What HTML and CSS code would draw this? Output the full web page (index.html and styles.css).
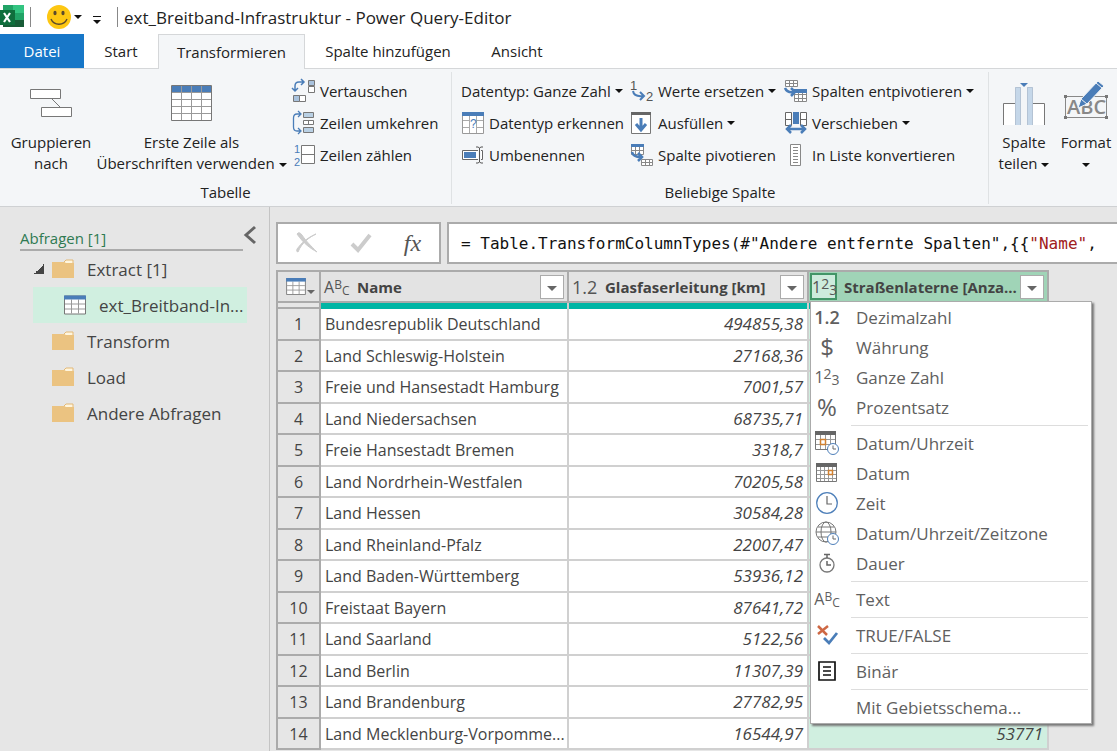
FILE: index.html
```html
<!DOCTYPE html>
<html lang="de">
<head>
  <meta charset="utf-8">
  <title>ext_Breitband-Infrastruktur - Power Query-Editor</title>
  <link rel="stylesheet" href="styles.css">
</head>
<body>
  <!-- Shared icons -->
  <svg class="defs" aria-hidden="true">
    <symbol id="folder" viewBox="0 0 22 20">
      <path d="M12 3l2-2h7v4H12z" fill="#fff6df" stroke="#e3b877"/>
      <path d="M0 3h12l2 1h8v15H0z" fill="#ebc381"/>
    </symbol>
    <symbol id="table" viewBox="0 0 22 19">
      <path d="M.5.5h21v18H.5z" fill="#fff" stroke="#777"/>
      <path d="M1 8.500h20M1 13.500h20M7.500 4v14M14.500 4v14" stroke="#999" fill="none"/>
      <path d="M0 0h22v4H0z" fill="#4a7db8"/>
    </symbol>
    <symbol id="clock" viewBox="0 0 22 22">
      <circle cx="11" cy="11" r="10.300" fill="#fff" stroke="#4f80ba" stroke-width="1.300"/>
      <path d="M11 4v8h5" fill="none" stroke="#666" stroke-width="1.200"/>
    </symbol>
  </svg>

  <header class="titlebar">
    <svg class="excel" width="24" height="24" viewBox="0 0 24 24">
      <path d="M3 0h10v22H3z" fill="#21a366"/>
      <path d="M13 0h11v8H13z" fill="#33c481"/>
      <path d="M3 7h10v8H3z" fill="#107c41"/>
      <path d="M13 8h11v7H13z" fill="#21a366"/>
      <path d="M3 15h21v7H3z" fill="#185c37"/>
      <path d="M0 5h15v15H0z" fill="#0f6e3c"/>
      <path d="M4 8l6 9M10 8l-6 9" stroke="#fff" stroke-width="2.200"/>
    </svg>
    <span class="divider"></span>
    <button class="smiley" aria-label="Feedback">
      <svg width="24" height="24" viewBox="0 0 24 24">
        <circle cx="12" cy="12" r="12" fill="#fdc712"/>
        <ellipse cx="8" cy="8" rx="1.600" ry="2.300" fill="#5b4a2c"/>
        <ellipse cx="16" cy="8" rx="1.600" ry="2.300" fill="#5b4a2c"/>
        <path d="M4 14c3 7 13 7 16 0" fill="none" stroke="#5b4a2c" stroke-width="1.400"/>
      </svg>
      <span class="caret"></span>
    </button>
    <button class="customize" aria-label="Symbolleiste anpassen"><span class="caret"></span></button>
    <span class="divider"></span>
    <h1>ext_Breitband-Infrastruktur - Power Query-Editor</h1>
  </header>

  <nav class="tabs">
    <button class="tab file">Datei</button>
    <button class="tab start">Start</button>
    <button class="tab active">Transformieren</button>
    <button class="tab add">Spalte hinzufügen</button>
    <button class="tab view">Ansicht</button>
  </nav>

  <section class="ribbon">
    <div class="group table-group">
      <div class="tools">
        <button class="large">
          <svg width="44" height="44" viewBox="0 0 44 44">
            <g fill="#fff" stroke="#777"><path d="M1.500 6.500h30v9h-30zM12.500 24.500h30v9h-30z"/><path d="M23 16l8 8"/></g>
          </svg>
          <span>Gruppieren<br>nach</span>
        </button>
        <button class="large wide">
          <svg width="44" height="44" viewBox="0 0 44 44">
            <path d="M1.500 2.500h40v35h-40z" fill="#fff" stroke="#777"/>
            <path d="M2 3h39v6H2z" fill="#4a7db8"/>
            <path d="M2 9.500h39M2 16.500h39M2 23.500h39M2 30.500h39M11.500 3v34M21.500 3v34M31.500 3v34" stroke="#999" fill="none"/>
          </svg>
          <span>Erste Zeile als<br>Überschriften verwenden <i class="caret"></i></span>
        </button>
        <div class="stack">
          <button class="small">
            <svg width="24" height="24" viewBox="0 0 24 24">
              <path d="M3 11V7q0-4 4-4h4M9 0l3 3-3 3M0 9l3 3 3-3" fill="none" stroke="#4a7db8" stroke-width="1.500"/>
              <g stroke="#777"><path d="M16.500 1.500h6v5h-6zM1.500 16.500h6v6h-6z" fill="#a9c2dd"/><path d="M16.500 7.500h6v6h-6zM7.500 16.500h6v6h-6z" fill="#fff"/></g>
            </svg>
            Vertauschen
          </button>
          <button class="small">
            <svg width="24" height="24" viewBox="0 0 24 24">
              <path d="M8 3H5Q1.500 3 1.500 7v9q0 4 3.500 4h3M6 0l3 3-3 3M6 17l3 3-3 3" fill="none" stroke="#4a7db8" stroke-width="1.300"/>
              <g stroke="#777"><path d="M11.500 1.500h10v5h-10zM11.500 16.500h10v5h-10z" fill="#b9d0e4"/><path d="M11.500 9.500h10v4h-10zM16.500 9v5" fill="#fff"/></g>
            </svg>
            Zeilen umkehren
          </button>
          <button class="small">
            <svg width="24" height="24" viewBox="0 0 24 24">
              <path d="M9.500 2.500h13v18h-13zM9 11.500h14" fill="#fff" stroke="#777"/>
              <text x="2" y="10" font-size="11" fill="#4a7db8">1</text><text x="2" y="23" font-size="11" fill="#4a7db8">2</text>
            </svg>
            Zeilen zählen
          </button>
        </div>
      </div>
      <h2>Tabelle</h2>
    </div>

    <div class="group column-group">
      <div class="tools">
        <div class="stack first">
          <button class="small">Datentyp: Ganze Zahl <i class="caret"></i></button>
          <button class="small">
            <svg width="24" height="24" viewBox="0 0 24 24">
              <path d="M1.500 1.500h21v21h-21z" fill="#fff" stroke="#999"/>
              <path d="M2 9.500h20M2 16.500h20M8.500 5v17M15.500 5v17" fill="none" stroke="#aaa"/>
              <path d="M1 1h22v4H1z" fill="#4a7db8"/><path d="M9 8h6v9H9z" fill="#fff"/>
              <text x="9" y="17" font-size="12" fill="#4a7db8">?</text>
            </svg>
            Datentyp erkennen
          </button>
          <button class="small">
            <svg width="24" height="24" viewBox="0 0 24 24">
              <path d="M17 7.500H1.500v9H17M20 7.500h1.500v9H20" fill="#fff" stroke="#666"/>
              <path d="M3 9h12v6H3z" fill="#4a7db8"/>
              <path d="M15 4h2l1.500 1L20 4h2M18.500 5v14M15 20h2l1.500-1 1.500 1h2" fill="none" stroke="#555"/>
            </svg>
            Umbenennen
          </button>
        </div>
        <div class="stack second">
          <button class="small">
            <svg width="24" height="24" viewBox="0 0 24 24">
              <text x="0" y="11" font-size="13" fill="#555">1</text><text x="16" y="22" font-size="13" fill="#555">2</text>
              <path d="M3 12q1 6 10 5M10 13l4 4-4 4" fill="none" stroke="#4a7db8" stroke-width="2"/>
            </svg>
            Werte ersetzen <i class="caret"></i>
          </button>
          <button class="small">
            <svg width="24" height="24" viewBox="0 0 24 24">
              <path d="M1.500 1.500h19v21h-19z" fill="#fff" stroke="#777"/><path d="M1 1h20v3H1z" fill="#666"/>
              <path d="M11 7v12M6 13l5 6 5-6" fill="none" stroke="#4a7db8" stroke-width="3"/>
            </svg>
            Ausfüllen <i class="caret"></i>
          </button>
          <button class="small">
            <svg width="24" height="24" viewBox="0 0 24 24">
              <path d="M1.500 1.500h12v10h-12zM1 7.500h13M5.500 4v8M9.500 4v8M11.500 16.500h11v6h-11zM11 19.500h12M15.500 16v7M19.500 16v7" fill="#fff" stroke="#888"/>
              <path d="M1 1h13v3H1z" fill="#4a7db8"/><path d="M2 9q1 5 9 5M8 10l4 4-4 4" fill="none" stroke="#4a7db8" stroke-width="2.500"/>
            </svg>
            Spalte pivotieren
          </button>
        </div>
        <div class="stack third">
          <button class="small">
            <svg width="24" height="24" viewBox="0 0 24 24">
              <path d="M1.500 1.500h12v6h-12zM1 4.500h13M5.500 1v7M9.500 1v7M10.500 11.500h12v11h-12zM10 15.500h13M10 19.500h13M14.500 11v12M18.500 11v12" fill="#fff" stroke="#888"/>
              <path d="M10 10h13v4H10z" fill="#4a7db8"/><path d="M1 9q2 5 9 4M7 9l4 4-4 4" fill="none" stroke="#4a7db8" stroke-width="2.500"/>
            </svg>
            Spalten entpivotieren <i class="caret"></i>
          </button>
          <button class="small">
            <svg width="24" height="24" viewBox="0 0 24 24">
              <path d="M1.500 1.500h6v13h-6zM1 8.500h6M16.500 1.500h6v13h-6zM17 8.500h6" fill="#fff" stroke="#666"/>
              <path d="M9 1h6v12H9z" fill="#4a7db8"/><path d="M3 18h18M7 14l-4 4 4 4M17 14l4 4-4 4" fill="none" stroke="#4a7db8" stroke-width="2.500"/>
            </svg>
            Verschieben <i class="caret"></i>
          </button>
          <button class="small">
            <svg width="24" height="24" viewBox="0 0 24 24">
              <path d="M6.500 1.500h10v21h-10z" fill="#fff" stroke="#888"/>
              <path d="M9 4.500h5M9 7.500h5M9 10.500h5M9 13.500h5M9 16.500h5M9 19.500h5" stroke="#888"/>
            </svg>
            In Liste konvertieren
          </button>
        </div>
      </div>
      <h2>Beliebige Spalte</h2>
    </div>

    <div class="group text-group">
      <div class="tools">
        <button class="large narrow">
          <svg width="44" height="44" viewBox="0 0 44 44">
            <path d="M13 20.500H1.500V42M31 20.500h11.500V42" fill="#fff" stroke="#777"/>
            <path d="M2 21h11v21H2zM31 21h11v21H31z" fill="#fff"/>
            <path d="M13 4h18v38H13z" fill="#c5d7e9"/><path d="M19 4h6v38h-6z" fill="#f3f5f7"/>
            <path d="M13.500 42V4.500h5V42M25.500 42V4.500h5V42" fill="none" stroke="#b4c3d4"/>
            <path d="M18 0h8l-4 4z" fill="#4a7db8"/>
          </svg>
          <span>Spalte<br>teilen <i class="caret"></i></span>
        </button>
        <button class="large narrow">
          <svg width="46" height="44" viewBox="0 0 46 44">
            <path d="M2.500 13.500h41v21h-41z" fill="none" stroke="#888"/>
            <text x="4" y="31" font-size="20" font-weight="600" fill="#888">ABC</text>
            <path d="M1 12h3v3H1zM42 12h3v3h-3zM1 33h3v3H1zM42 33h3v3h-3z" fill="#777"/>
            <path d="M15 25l3-9L35-2l6 5-17 18z" fill="#4a7db8" stroke="#f3f5f7"/><path d="M33 0l6 5M18 16l6 5" stroke="#f3f5f7"/>
          </svg>
          <span>Format<br><i class="caret"></i></span>
        </button>
      </div>
    </div>
  </section>

  <main>
    <aside>
      <div class="queries-head">
        <h2>Abfragen [1]</h2>
        <button aria-label="Bereich einklappen">
          <svg width="14" height="18" viewBox="0 0 14 18"><path d="M12 1L3 9l9 8" fill="none" stroke="#666" stroke-width="3"/></svg>
        </button>
      </div>
      <ul class="queries">
        <li><span class="open"></span><svg><use href="#folder"/></svg>Extract [1]</li>
        <li class="selected"><svg><use href="#table"/></svg>ext_Breitband-In...</li>
        <li><svg><use href="#folder"/></svg>Transform</li>
        <li><svg><use href="#folder"/></svg>Load</li>
        <li><svg><use href="#folder"/></svg>Andere Abfragen</li>
      </ul>
    </aside>

    <section class="content">
      <div class="formula">
        <div class="formula-buttons">
          <button aria-label="Abbrechen"><svg width="22" height="22" viewBox="0 0 22 22"><path d="M1 2q2-3 5 1c4 6 8 10 15 17C14 16 8 12 1 2zM20 2C14 5 6 10 2 20q-2 0-1-3Q8 7 20 2z" fill="#ccc" stroke="#ccc"/></svg></button>
          <button aria-label="Übernehmen"><svg width="22" height="22" viewBox="0 0 22 22"><path d="M2 12l6 6L20 3" fill="none" stroke="#ccc" stroke-width="4"/></svg></button>
          <button class="fx">fx</button>
        </div>
        <div class="formula-text"><code>= Table.TransformColumnTypes(#"Andere entfernte Spalten",{{<b>"Name"</b>,</code></div>
      </div>

      <table class="grid">
        <colgroup><col class="c-num"><col class="c-name"><col class="c-val"><col class="c-val"></colgroup>
        <thead>
          <tr>
            <th><div class="head corner"><svg width="20" height="17"><use href="#table"/></svg><span class="caret"></span></div></th>
            <th><div class="head"><span class="type abc">A<sup>B</sup><sub>C</sub></span><span class="label">Name</span><button class="filter" aria-label="Name filtern"><span class="caret"></span></button></div></th>
            <th><div class="head"><span class="type dec">1.2</span><span class="label">Glasfaserleitung [km]</span><button class="filter" aria-label="Glasfaserleitung filtern"><span class="caret"></span></button></div></th>
            <th class="chosen">
              <div class="head"><button class="type n123">1<sup>2</sup><sub>3</sub></button><span class="label">Straßenlaterne [Anza...</span><button class="filter" aria-label="Straßenlaterne filtern"><span class="caret"></span></button></div>
              <ul class="menu">
                <li><button><span class="ico dec">1.2</span>Dezimalzahl</button></li>
                <li><button><span class="ico sign">$</span>Währung</button></li>
                <li><button><span class="ico n123">1<sup>2</sup><sub>3</sub></span>Ganze Zahl</button></li>
                <li><button><span class="ico sign">%</span>Prozentsatz</button></li>
                <li class="line"></li>
                <li><button><span class="ico"><svg width="24" height="24" viewBox="0 0 24 24">
                  <path d="M.5.5h20v18H.5z" fill="#fff" stroke="#777"/><path d="M5.500 4v14M10.500 4v14M15.500 4v14M1 8.500h19M1 13.500h19" stroke="#999"/><path d="M0 0h21v4H0z" fill="#666"/>
                  <path d="M5.500 8.500h5v5h-5z" fill="#fff" stroke="#d08030" stroke-width="1.500"/><circle cx="18" cy="18" r="5.500" fill="#fff" stroke="#4f80ba"/><path d="M18 14.500V18h3" fill="none" stroke="#666"/></svg></span>Datum/Uhrzeit</button></li>
                <li><button><span class="ico"><svg width="22" height="20" viewBox="0 0 22 20">
                  <path d="M.5.5h20v18H.5z" fill="#fff" stroke="#777"/><path d="M4.500 4v14M8.500 4v14M12.500 4v14M16.500 4v14M1 7.500h19M1 11.500h19M1 15.500h19" stroke="#999"/><path d="M0 0h21v4H0z" fill="#666"/>
                  <path d="M12.500 7.500h4v4h-4z" fill="#fff" stroke="#d08030" stroke-width="1.500"/></svg></span>Datum</button></li>
                <li><button><span class="ico"><svg width="22" height="22"><use href="#clock"/></svg></span>Zeit</button></li>
                <li><button><span class="ico"><svg width="24" height="24" viewBox="0 0 24 24">
                  <g fill="none" stroke="#777"><circle cx="11" cy="11" r="10"/><ellipse cx="11" cy="11" rx="5" ry="10"/><path d="M1 11h20M3 6h16M3 16h16"/></g>
                  <circle cx="18" cy="18" r="5.500" fill="#fff" stroke="#4f80ba"/><path d="M18 14.500V18h3" fill="none" stroke="#666"/></svg></span>Datum/Uhrzeit/Zeitzone</button></li>
                <li><button><span class="ico"><svg width="18" height="20" viewBox="0 0 18 20">
                  <circle cx="9" cy="12" r="7" fill="none" stroke="#777" stroke-width="1.300"/><path d="M6 1.500h6M9 1v4M9 8v4h4" fill="none" stroke="#666" stroke-width="1.500"/></svg></span>Dauer</button></li>
                <li class="line"></li>
                <li><button><span class="ico abc">A<sup>B</sup><sub>C</sub></span>Text</button></li>
                <li class="line"></li>
                <li><button><span class="ico"><svg width="22" height="22" viewBox="0 0 22 22">
                  <path d="M2 2l9 9M12 2L2 10" stroke="#ce6844" stroke-width="2.500"/><path d="M8 14l5 5 8-10" fill="none" stroke="#4a7db8" stroke-width="2.800"/></svg></span>TRUE/FALSE</button></li>
                <li class="line"></li>
                <li><button><span class="ico"><svg width="20" height="20" viewBox="0 0 20 20">
                  <path d="M2 1h16v18H2zM6 6h8M6 10h8M6 14h8" fill="none" stroke="#111" stroke-width="1.700"/></svg></span>Binär</button></li>
                <li class="line"></li>
                <li><button><span class="ico"></span>Mit Gebietsschema...</button></li>
              </ul>
            </th>
          </tr>
          <tr class="quality"><td></td><td></td><td></td><td></td></tr>
        </thead>
        <tbody>
          <tr><th>1</th><td>Bundesrepublik Deutschland</td><td>494855,38</td><td></td></tr>
          <tr><th>2</th><td>Land Schleswig-Holstein</td><td>27168,36</td><td></td></tr>
          <tr><th>3</th><td>Freie und Hansestadt Hamburg</td><td>7001,57</td><td></td></tr>
          <tr><th>4</th><td>Land Niedersachsen</td><td>68735,71</td><td></td></tr>
          <tr><th>5</th><td>Freie Hansestadt Bremen</td><td>3318,7</td><td></td></tr>
          <tr><th>6</th><td>Land Nordrhein-Westfalen</td><td>70205,58</td><td></td></tr>
          <tr><th>7</th><td>Land Hessen</td><td>30584,28</td><td></td></tr>
          <tr><th>8</th><td>Land Rheinland-Pfalz</td><td>22007,47</td><td></td></tr>
          <tr><th>9</th><td>Land Baden-Württemberg</td><td>53936,12</td><td></td></tr>
          <tr><th>10</th><td>Freistaat Bayern</td><td>87641,72</td><td></td></tr>
          <tr><th>11</th><td>Land Saarland</td><td>5122,56</td><td></td></tr>
          <tr><th>12</th><td>Land Berlin</td><td>11307,39</td><td></td></tr>
          <tr><th>13</th><td>Land Brandenburg</td><td>27782,95</td><td></td></tr>
          <tr><th>14</th><td>Land Mecklenburg-Vorpomme...</td><td>16544,97</td><td>53771</td></tr>
        </tbody>
      </table>
    </section>
  </main>
</body>
</html>
```
FILE: styles.css
```css
* {
  box-sizing: border-box;
}
body {
  margin: 0;
  height: 100vh;
  display: flex;
  flex-direction: column;
  overflow: hidden;
  background: #fff;
  color: #222;
  font-family: "Open Sans", "Noto Sans", sans-serif;
  font-size: 15px;
}
button {
  font: inherit;
  color: inherit;
  background: none;
  border: none;
  padding: 0;
  white-space: nowrap;
}
h1, h2, ul {
  margin: 0;
  padding: 0;
  font-weight: normal;
  list-style: none;
}
svg {
  flex: none;
  overflow: visible;
}
.small text {
  font-family: "Liberation Sans", sans-serif;
}
.defs {
  display: none;
}
.caret {
  display: inline-block;
  flex: none;
  border: 4px solid transparent;
  border-top-color: #111;
  border-bottom: none;
  vertical-align: middle;
}

/* Title bar */
.titlebar {
  display: flex;
  align-items: center;
  height: 34px;
  flex: none;
}
.titlebar h1 {
  font-size: 17px;
  margin-left: 6px;
  white-space: nowrap;
}
.divider {
  width: 1px;
  height: 20px;
  background: #888;
  margin-left: 6px;
}
.smiley {
  display: flex;
  align-items: center;
  gap: 3px;
  margin-left: 16px;
}
.customize {
  display: flex;
  border-top: 1px solid #111;
  padding: 3px 0 0;
  margin: 5px 10px 0 11px;
}

/* Tabs */
.tabs {
  display: flex;
  height: 35px;
  flex: none;
  border-bottom: 1px solid #d5d7d9;
}
.tab {
  height: 34px;
}
.file {
  width: 84px;
  background: #1777c8;
  color: #fff;
}
.start {
  width: 74px;
}
.active {
  width: 147px;
  height: 35px;
  background: #f4f6f8;
  border: 1px solid #d5d7d9;
  border-bottom: none;
}
.add {
  width: 166px;
}
.view {
  width: 92px;
}

/* Ribbon */
.ribbon {
  display: flex;
  flex: none;
  height: 138px;
  background: #f4f6f8;
  border-bottom: 1px solid #cfd1d3;
}
.group {
  display: flex;
  flex-direction: column;
  flex: none;
  margin: 3px 0 2px;
  padding-top: 3px;
  border-right: 1px solid #dfe2e4;
}
.group h2 {
  font-size: 15px;
  line-height: 21px;
  margin-top: 11px;
  text-align: center;
}
.tools {
  display: flex;
  height: 96px;
}
.table-group {
  width: 452px;
  padding: 3px 5px 0;
}
.column-group {
  width: 537px;
  padding: 3px 9px 0;
}
.text-group {
  flex: 1;
  border: none;
  padding-left: 4px;
  overflow: hidden;
}
.large {
  display: flex;
  flex-direction: column;
  align-items: center;
  align-self: flex-start;
  flex: none;
  gap: 5px;
  width: 92px;
  padding-top: 8px;
  line-height: 21px;
}
.wide {
  width: 187px;
  margin: 0 7px 0 1px;
}
.narrow {
  width: 62px;
}
.stack {
  display: flex;
  flex-direction: column;
  align-items: flex-start;
  flex: none;
}
.first {
  width: 169px;
}
.second {
  width: 154px;
}
.small {
  display: flex;
  align-items: center;
  gap: 4px;
  height: 32px;
}

/* Queries pane */
main {
  display: flex;
  flex: 1;
  min-height: 0;
  background: #e6e6e6;
}
aside {
  width: 270px;
  flex: none;
  border-right: 1px solid #c4c4c4;
  color: #444;
  padding-top: 19px;
}
.queries-head {
  display: flex;
  justify-content: space-between;
  align-items: flex-start;
  margin: 0 12px 0 20px;
}
.queries-head h2 {
  flex: 1;
  color: #2f7a52;
  font-size: 15px;
  line-height: 21px;
  padding-top: 2px;
  border-bottom: 2px solid #ababab;
}
.queries li {
  display: flex;
  align-items: center;
  height: 36px;
  padding-left: 52px;
  font-size: 17px;
}
.queries svg {
  width: 22px;
  height: 20px;
  margin-right: 13px;
}
.queries .selected {
  margin: 0 22px 0 33px;
  padding-left: 31px;
  background: #d0efe0;
}
.open {
  width: 10px;
  height: 10px;
  margin: 0 8px 0 -18px;
  background: linear-gradient(135deg, transparent 50%, #444 50%);
}

/* Formula bar */
.content {
  flex: 1;
  min-width: 0;
  padding: 15px 0 0 6px;
}
.formula {
  display: flex;
  height: 42px;
  gap: 6px;
  margin-bottom: 6px;
}
.formula-buttons {
  display: flex;
  align-items: center;
  justify-content: space-around;
  width: 165px;
  padding: 0 2px;
  flex: none;
  background: #fff;
  border: 2px solid #ababab;
}
.formula-buttons svg {
  display: block;
}
.fx {
  font: italic 24px "Liberation Serif", serif;
  color: #555;
}
.formula-text {
  flex: 1;
  min-width: 0;
  overflow: hidden;
  background: #fff;
  border: 2px solid #ababab;
  border-right: none;
  padding-left: 12px;
  color: #111;
  line-height: 38px;
  white-space: nowrap;
}
code {
  font-family: "DejaVu Sans Mono", monospace;
  font-size: 16px;
}
code b {
  color: #a02020;
  font-weight: normal;
}

/* Data grid */
.grid {
  width: 773px;
  table-layout: fixed;
  border-collapse: separate;
  border-spacing: 0;
  color: #444;
}
.c-num {
  width: 45px;
}
.c-name {
  width: 248px;
}
.c-val {
  width: 240px;
}
.grid th, .grid td {
  padding: 0;
}
thead th {
  position: relative;
  height: 33px;
  background: #e3e3e3;
  border: 2px solid #ababab;
  border-left: none;
}
thead th:first-child, tbody th {
  border-left: 2px solid #ababab;
}
.head {
  display: flex;
  align-items: center;
  height: 29px;
  padding: 0 3px;
}
.corner {
  padding-left: 8px;
  gap: 1px;
}
.corner .caret {
  border-top-color: #666;
  margin-top: 10px;
}
.label {
  flex: 1;
  text-align: left;
  white-space: nowrap;
}
.type {
  width: 33px;
  flex: none;
  text-align: left;
  font-weight: normal;
  color: #555;
}
.abc, .n123 {
  font-size: 16px;
  line-height: 20px;
}
.dec {
  font-size: 18px;
  font-weight: 500;
}
sup, sub {
  font-size: 14px;
  line-height: 0;
}
sup {
  vertical-align: 4px;
}
sub {
  vertical-align: -2px;
}
.abc sup, .abc sub {
  font-size: 12px;
}
.filter {
  width: 24px;
  height: 24px;
  flex: none;
  background: #fff;
  border: 1px solid #ababab;
}
.filter .caret {
  border-width: 5px 5px 0;
  border-top-color: #666;
}
.grid .chosen {
  background: #a0d4b7;
}
.chosen .head {
  padding-left: 1px;
}
.chosen .type {
  width: 27px;
  height: 27px;
  margin-right: 7px;
  text-align: center;
  background: #cdebdc;
  border: 2px solid #429567;
}
.quality td {
  height: 6px;
  background: #00b5a4;
  border-right: 2px solid #d0d0d0;
}
.grid .quality td:first-child {
  background: #e6e6e6;
  border: 2px solid #ababab;
  border-top: none;
}
tbody tr {
  height: 32px;
}
tbody tr:nth-child(even) {
  height: 31px;
}
tbody th {
  font-weight: normal;
  font-size: 16px;
  line-height: 20px;
  border-right: 2px solid #ababab;
  border-bottom: 2px solid #ababab;
}
tbody td {
  background: #fff;
  border-right: 2px solid #d0d0d0;
  border-bottom: 2px solid #d0d0d0;
  text-align: right;
  font-size: 17px;
  font-style: italic;
  line-height: 20px;
  white-space: nowrap;
}
.grid tbody td {
  padding: 0 4px;
}
.grid tbody td:nth-child(2) {
  text-align: left;
  font-size: 16px;
  font-style: normal;
}
.grid tbody td:nth-child(4) {
  background: #d0efe0;
}

/* Type menu */
.menu {
  position: absolute;
  z-index: 1;
  top: 29px;
  left: 1px;
  width: 282px;
  padding-bottom: 1px;
  background: #fff;
  border: 1px solid #ababab;
  box-shadow: 2px 2px 2px #777;
}
.menu button {
  display: flex;
  align-items: center;
  width: 100%;
  height: 30px;
  color: #606060;
  font-size: 17px;
  font-weight: normal;
}
.ico {
  display: flex;
  align-items: center;
  justify-content: center;
  width: 32px;
  flex: none;
  margin-right: 13px;
}
.ico.dec {
  font-weight: 600;
}
.ico.sign {
  font-size: 24px;
  line-height: 30px;
  font-weight: 500;
}
.ico.abc, .ico.n123 {
  display: block;
  text-align: center;
}
.line {
  height: 1px;
  margin: 3px 3px 2px 40px;
  background: #ddd;
}
```
